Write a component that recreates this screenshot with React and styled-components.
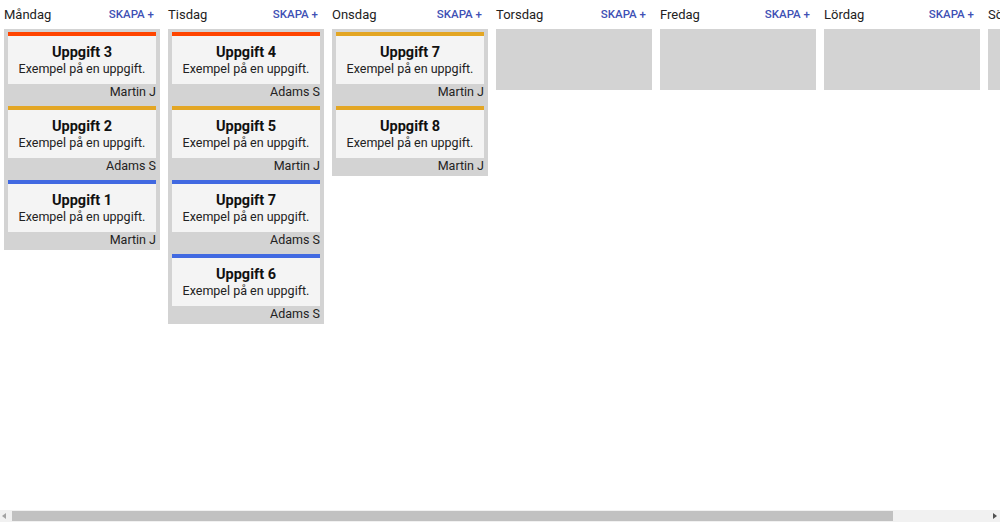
import React from 'react';
import styled, { createGlobalStyle } from 'styled-components';

const GlobalStyle = createGlobalStyle`
  html, body {
    margin: 0;
    padding: 0;
    background: #ffffff;
    font-family: Roboto, "Noto Sans", "Liberation Sans", sans-serif;
    color: #1a1a1a;
  }
`;

const Viewport = styled.div`
  height: 100vh;
  overflow-x: auto;
  overflow-y: hidden;
`;

// replica of the browser's horizontal scrollbar seen in the screenshot
const ScrollBar = styled.div`
  position: fixed;
  left: 0;
  right: 0;
  bottom: 0;
  height: 12px;
  background: #f1f1f1;
  display: flex;
  align-items: center;
  padding: 0 2px;
  box-sizing: border-box;
`;

const Arrow = styled.span`
  width: 0;
  height: 0;
  border-top: 3px solid transparent;
  border-bottom: 3px solid transparent;
  ${(p) =>
    p.$dir === 'left'
      ? 'border-right: 4px solid #a3a3a3; margin-right: 6px;'
      : 'border-left: 4px solid #505050; margin-left: auto; margin-right: 1px;'}
`;

const Thumb = styled.div`
  width: 881px;
  height: 10px;
  background: #c1c1c1;
`;

const Board = styled.div`
  display: flex;
  gap: 8px;
  padding: 0 4px;
  width: max-content;
  align-items: flex-start;
`;

const Column = styled.div`
  width: 156px;
  display: flex;
  flex-direction: column;
`;

const ColumnHeader = styled.div`
  height: 29px;
  display: flex;
  align-items: center;
  justify-content: space-between;
  padding-right: 6px;
  padding-bottom: 1px;
  box-sizing: border-box;

  .day {
    font-size: 13px;
    color: #222;
  }
`;

const CreateButton = styled.button`
  background: none;
  border: none;
  padding: 0;
  font-family: inherit;
  font-size: 11.5px;
  font-weight: 500;
  color: #3f51b5;
  text-transform: uppercase;
  cursor: pointer;
`;

const Lane = styled.div`
  background: #d3d3d3;
  min-height: 61px;
  padding: 3px 4px 0;
  box-sizing: border-box;
  display: flex;
  flex-direction: column;
  gap: 4px;
`;

const Card = styled.div`
  display: flex;
  flex-direction: column;
  height: 70px;
  box-sizing: border-box;
  border-top: 4px solid ${(p) => p.$color};
`;

const CardBody = styled.div`
  background: #f4f4f4;
  height: 48px;
  padding-top: 2px;
  box-sizing: border-box;
  display: flex;
  flex-direction: column;
  align-items: center;
  justify-content: center;

  h3 {
    margin: 0;
    font-size: 14.5px;
    font-weight: 700;
    line-height: 16px;
    color: #111;
  }

  p {
    margin: 0;
    font-size: 12.5px;
    line-height: 16px;
    color: #222;
  }
`;

const Assignee = styled.div`
  height: 18px;
  line-height: 15px;
  text-align: right;
  font-size: 12.5px;
  color: #222;
`;

const COLORS = {
  red: '#ff4500',
  yellow: '#e3a624',
  blue: '#4169e1',
};

const days = [
  {
    name: 'Måndag',
    tasks: [
      { title: 'Uppgift 3', who: 'Martin J', color: 'red' },
      { title: 'Uppgift 2', who: 'Adams S', color: 'yellow' },
      { title: 'Uppgift 1', who: 'Martin J', color: 'blue' },
    ],
  },
  {
    name: 'Tisdag',
    tasks: [
      { title: 'Uppgift 4', who: 'Adams S', color: 'red' },
      { title: 'Uppgift 5', who: 'Martin J', color: 'yellow' },
      { title: 'Uppgift 7', who: 'Adams S', color: 'blue' },
      { title: 'Uppgift 6', who: 'Adams S', color: 'blue' },
    ],
  },
  {
    name: 'Onsdag',
    tasks: [
      { title: 'Uppgift 7', who: 'Martin J', color: 'yellow' },
      { title: 'Uppgift 8', who: 'Martin J', color: 'yellow' },
    ],
  },
  { name: 'Torsdag', tasks: [] },
  { name: 'Fredag', tasks: [] },
  { name: 'Lördag', tasks: [] },
  { name: 'Söndag', tasks: [] },
];

const App = () => {
  return (
    <Viewport>
      <GlobalStyle />
      <Board>
        {days.map((day) => (
          <Column key={day.name}>
            <ColumnHeader>
              <span className="day">{day.name}</span>
              <CreateButton>Skapa +</CreateButton>
            </ColumnHeader>
            <Lane>
              {day.tasks.map((task, i) => (
                <Card key={i} $color={COLORS[task.color]}>
                  <CardBody>
                    <h3>{task.title}</h3>
                    <p>Exempel på en uppgift.</p>
                  </CardBody>
                  <Assignee>{task.who}</Assignee>
                </Card>
              ))}
            </Lane>
          </Column>
        ))}
      </Board>
      <ScrollBar>
        <Arrow $dir="left" />
        <Thumb />
        <Arrow $dir="right" />
      </ScrollBar>
    </Viewport>
  );
};

export default App;
